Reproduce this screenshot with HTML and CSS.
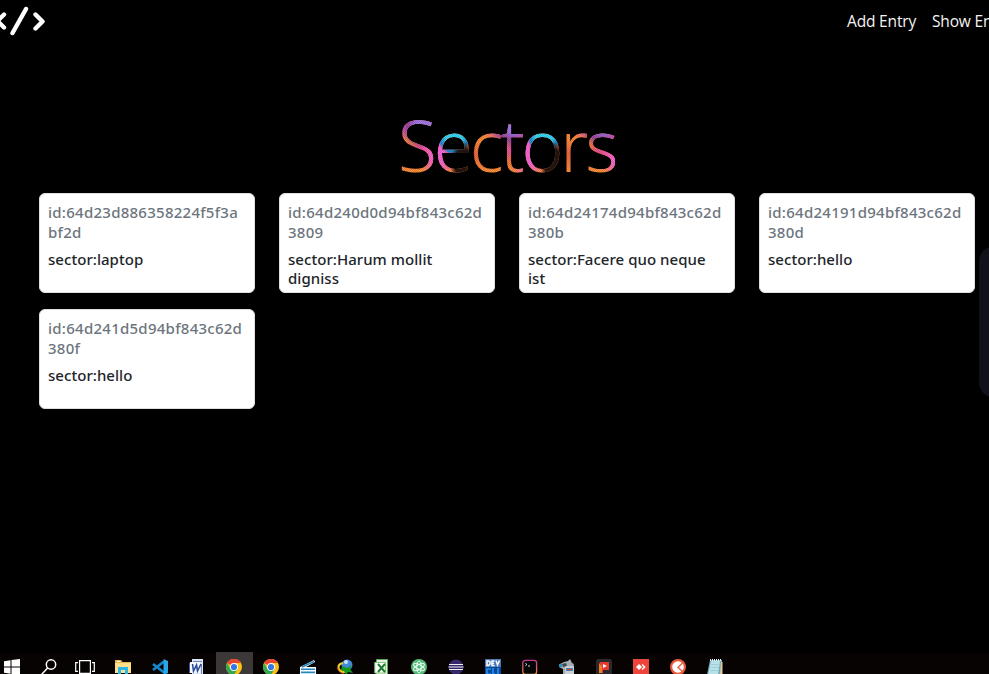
FILE: index.html
```
<!DOCTYPE html>
<html lang="en">
<head>
<meta charset="utf-8">
<title>Sectors</title>
<link rel="stylesheet" href="styles.css">
</head>
<body>
<div class="page">
  <header class="navbar">
    <svg class="logo" viewBox="0 0 48 36" fill="none" stroke="#fff" stroke-width="4.4" stroke-linecap="round" stroke-linejoin="round"><path d="M4 14.5-2.500 21 4 27.500M26 9 12.500 33M35.500 14.500 42.500 21.500 35.500 28.500"/></svg>
    <nav class="links"><a>Add Entry</a><a>Show Entry</a></nav>
  </header>
  <h1 class="title"><span>Sectors</span></h1>
  <main class="cards">
    <article class="card"><h6 class="id">id:64d23d886358224f5f3a<br>bf2d</h6><h6 class="sector">sector:laptop</h6></article>
    <article class="card"><h6 class="id">id:64d240d0d94bf843c62d<br>3809</h6><h6 class="sector">sector:Harum mollit<br>digniss</h6></article>
    <article class="card"><h6 class="id">id:64d24174d94bf843c62d<br>380b</h6><h6 class="sector">sector:Facere quo neque<br>ist</h6></article>
    <article class="card"><h6 class="id">id:64d24191d94bf843c62d<br>380d</h6><h6 class="sector">sector:hello</h6></article>
    <article class="card"><h6 class="id">id:64d241d5d94bf843c62d<br>380f</h6><h6 class="sector">sector:hello</h6></article>
  </main>
  <div class="side-handle"></div>
  <footer class="taskbar">
    <div class="item"><svg viewBox="0 0 16 16" fill="#fff"><path d="M0 2.300 6.500 1.300V7.500H0zM7.500 1.100 16 0V7.500H7.500zM0 8.500H6.500V14.700L0 13.700zM7.500 8.500H16V16L7.500 14.900z"/></svg></div>
    <div class="item"><svg viewBox="0 0 16 16" fill="none" stroke="#fff" stroke-width="1.500"><circle cx="10" cy="5.500" r="4.700"/><path d="M6.600 9 .5 15.500"/></svg></div>
    <div class="item"><svg class="wide" viewBox="0 0 20 16" fill="none" stroke="#fff" stroke-width="1.200"><path d="M4.600 1.600H15.400V14.400H4.600zM3 3.600H.7V12.400H3M17 3.600H19.300V12.400H17"/></svg></div>
    <div class="item"><svg viewBox="0 0 16 16"><path fill="#e8b64b" d="M0 1H6L7.500 3H16V14H0z"/><path fill="#ffe08a" d="M0 4H16V14H0z"/><path fill="#fff" d="M2 2H5V3H2z"/><path fill="#29b6e8" d="M3 16V8H13V16H10V11H6V16z"/></svg></div>
    <div class="item"><svg viewBox="0 0 16 16"><path fill="none" stroke="#1687cc" stroke-width="2.600" d="M1 5 12 13.500M1 11 12 2.500"/><path fill="#29a5ed" d="M11.500 0 16 2V14L11.500 16z"/></svg></div>
    <div class="item"><svg viewBox="0 0 16 16"><path fill="#dbe5f5" d="M3 0H14V16H3z"/><path stroke="#7188b8" d="M4 2.500H13M12.500 5V15"/><path fill="#3655a5" d="M0 4H3V14H0z"/><path fill="#f7f9ff" d="M1 3H11V14H1z"/><path fill="none" stroke="#2b4a99" stroke-width="1.600" d="M3.500 5 4.500 12 7.500 6 8.500 12 12 5"/></svg></div>
    <div class="item active"><svg viewBox="0 0 16 16"><circle cx="8" cy="8" r="8" fill="#fbc116"/><path fill="#ea4335" d="M8 8 1.070 4A8 8 0 0 1 14.930 4H8z"/><path fill="#34a853" d="M1.070 4A8 8 0 0 0 8 16L11.500 10 4.500 10z"/><circle cx="8" cy="8" r="4" fill="#fff"/><circle cx="8" cy="8" r="3.100" fill="#3478e5"/></svg></div>
    <div class="item"><svg viewBox="0 0 16 16"><circle cx="8" cy="8" r="8" fill="#fbc116"/><path fill="#ea4335" d="M8 8 1.070 4A8 8 0 0 1 14.930 4H8z"/><path fill="#34a853" d="M1.070 4A8 8 0 0 0 8 16L11.500 10 4.500 10z"/><circle cx="8" cy="8" r="4" fill="#fff"/><circle cx="8" cy="8" r="3.100" fill="#3478e5"/></svg></div>
    <div class="item"><svg viewBox="0 0 16 16"><path fill="#fff" d="M0 8 14 1 15 3 6 8H16V15H0z"/><path fill="none" stroke="#2386bd" stroke-width="1.600" d="M2 8 14 2.500M1 10.200H15M1 13.400H15"/></svg></div>
    <div class="item"><svg viewBox="0 0 16 16"><circle cx="10" cy="6" r="5.500" fill="#4388db"/><circle cx="9" cy="3" r="2" fill="#c5e4fb"/><path fill="none" stroke="#e5d326" stroke-width="2.200" d="M6 4Q1 5 1.500 9T8 13"/><path fill="none" stroke="#d6362b" d="M.5 8Q1 14 7 14.500"/><path fill="#159a1b" d="M5 7 10 9 15 6 13 10 16 14 11 13 9 16 7 12 4 11z"/></svg></div>
    <div class="item"><svg viewBox="0 0 16 16"><path fill="#e6f1e2" stroke="#57a958" d="M2.500.5H13.500V15.500H2.500z"/><path fill="#f8fff6" stroke="#8cc47f" d="M.8 3.500H11.500V14H.8z"/><path fill="none" stroke="#237c34" stroke-width="2" d="M4 5 11 13M11 5 4 13"/></svg></div>
    <div class="item"><svg viewBox="0 0 16 16" fill="none" stroke="#e7fff0"><circle cx="8" cy="8" r="8" fill="#55b978" stroke="none"/><ellipse cx="8" cy="8" rx="2.300" ry="6"/><ellipse cx="8" cy="8" rx="2.300" ry="6" transform="rotate(60 8 8)"/><ellipse cx="8" cy="8" rx="2.300" ry="6" transform="rotate(120 8 8)"/></svg></div>
    <div class="item"><svg viewBox="0 0 16 16"><circle cx="8" cy="8" r="7.500" fill="#35286b"/><path stroke="#eee" stroke-width="1.200" d="M1 5.500H15M.5 8H15.500M1 10.500H15"/></svg></div>
    <div class="item"><svg viewBox="0 0 16 16"><path fill="#4c79ba" d="M0 0H16V8H0z"/><path fill="#074a98" d="M0 8H16V16H0z"/><path fill="none" stroke="#fff" stroke-width="1.500" d="M2 2V6.500H3.500L5 5V3L3.500 2zM9.500 2H7V6.500H9.500M7 4.300H9M11 1.500 12.500 6 14.500 1.500"/><path fill="none" stroke="#278bea" stroke-width="1.700" d="M6 10H2V15H6M8 9V15H10M13 9V16"/></svg></div>
    <div class="item"><svg viewBox="0 0 16 16"><defs><linearGradient id="frame" x2="0" y2="1"><stop stop-color="#c03791"/><stop offset="1" stop-color="#e6953d"/></linearGradient></defs><rect x=".8" y="1.300" width="13.800" height="14" rx="2.500" fill="#050507" stroke="url(#frame)" stroke-width="1.300"/><path fill="none" stroke="#ddd" d="M3.500 4.500 5 5.500 3.500 6.500M6 7H8"/></svg></div>
    <div class="item"><svg viewBox="0 0 16 16"><path fill="#a3adb3" d="M1 5 5 3 9 2 11 0 13 4 15 5 14 9H15V15H4V10L0 8z"/><path fill="#c9d0d4" d="M6 7H15V15H6z"/><path fill="#40484e" d="M3 5 7 4 8 7 4 8z"/><path fill="#2a91cb" d="M0 5H3V8H0zM7 9H14V12H7z"/><path stroke="#e33632" stroke-width="1.500" d="M8 10.500H13"/></svg></div>
    <div class="item"><svg viewBox="0 0 16 16"><rect width="16" height="16" rx="2.500" fill="#292a2d"/><path fill="#e7392e" d="M4 3H13V11H7V14H3V5z"/><path fill="#fa7a20" d="M3 5 6 7V14H3z"/><path fill="#fff" d="M7 5 11 7 7 9z"/></svg></div>
    <div class="item"><svg viewBox="0 0 16 16"><path fill="#ef443b" d="M0 0H16V16H0z"/><path fill="#fff" d="M3 8 6 5 9 8 6 11zM9.500 5 12.800 8 9.500 11 8.500 10 10.500 8 8.500 6z"/></svg></div>
    <div class="item"><svg viewBox="0 0 16 16" fill="none"><circle cx="8" cy="8" r="6.900" fill="#fff" stroke="#ed593b" stroke-width="2.200"/><path stroke="#ed593b" stroke-width="1.300" d="M12.500 4 8 8.500 12.500 12.500"/></svg></div>
    <div class="item"><svg viewBox="0 0 16 16"><path fill="#75a9b7" d="M3 1H15V16H0z"/><path fill="#b8e2e8" d="M4 2H13L11 16H1z"/><path fill="#e4c99c" d="M14 3H15.500V16H13z"/><path stroke="#e8f8fa" stroke-dasharray="1 1" stroke-width="2" d="M3 1H15"/><path stroke="#9fd0da" d="M4 5.500H12M3.500 8.500H12M3 11.500H11"/></svg></div>
  </footer>
</div>
</body>
</html>
```
FILE: styles.css
```
* { box-sizing: border-box; }
body { margin: 0; background: #000; font-family: "Noto Sans", "Open Sans", sans-serif; overflow: hidden; }
.page { position: relative; width: 989px; height: 674px; overflow: hidden; display: flex; flex-direction: column; }
.navbar { height: 101px; flex: none; display: flex; align-items: flex-start; justify-content: space-between; color: #f4f4f4; }
.logo { width: 48px; height: 36px; flex: none; }
.links { display: flex; gap: 16px; width: 142px; padding-top: 9px; font: 15.5px/24px "Open Sans", sans-serif; letter-spacing: -.17px; white-space: nowrap; }
.title { height: 92px; margin: 0; padding-left: 398px; flex: none; font: 300 71px/88px "Noto Sans", "Open Sans", sans-serif; }
.title span {
  display: inline-block;
  letter-spacing: -3.1px;
  color: transparent;
  background-image:
    repeating-conic-gradient(rgba(0,0,0,.14) 0 25%, transparent 0 50%),
    radial-gradient(ellipse 13px 22px at 73px 62px, #241512 65%, transparent),
    radial-gradient(ellipse 17px 20px at 64px 34px, #37d9fa 50%, #1688d5 85%, transparent),
    radial-gradient(ellipse 18px 28px at 48px 54px, #ff68dc 35%, transparent),
    radial-gradient(ellipse 24px 24px at 33px 24px, #a47af0 30%, #9a469f 65%, transparent),
    radial-gradient(ellipse 17px 15px at 16px 24px, #f05cc0 30%, transparent),
    radial-gradient(ellipse 12px 12px at 32px 48px, #f050a0 20%, transparent),
    linear-gradient(#ff913d, #ff8b3d 45%, #f06840 60%, #ff913d 80%);
  background-size: 2px 2px, 90px 88px, 90px 88px, 90px 88px, 90px 88px, 90px 88px, 90px 88px, 90px 88px;
  background-position: -8px 0;
  -webkit-background-clip: text;
  background-clip: text;
}
.cards { display: grid; grid-template-columns: repeat(4, 216px); grid-auto-rows: 100px; gap: 16px 24px; padding-left: 39px; flex: 1; align-content: start; }
.card { background: #fff; border: 1px solid #dcdfe1; border-radius: 6px; padding: 8px; white-space: nowrap; }
.card h6 { margin: 0; font-size: 15px; font-weight: 500; line-height: 19.2px; }
.card .id { color: #6c757d; line-height: 20px; margin-bottom: 8px; letter-spacing: .26px; }
.card .sector { color: #212529; letter-spacing: .04px; }
.side-handle { position: absolute; left: 979px; top: 247px; width: 30px; height: 150px; border-radius: 14px; background: #101119; }
.taskbar { height: 21px; flex: none; display: flex; margin-left: -6px; background: #080303; }
.item { width: 36.96px; height: 22px; flex: none; display: flex; justify-content: center; padding-top: 6px; }
.item svg { width: 16px; height: 16px; flex: none; }
.item svg.wide { width: 20px; margin-left: -3px; }
.item.active { background: #3c3838; margin-top: -1px; padding-top: 7px; }
```
